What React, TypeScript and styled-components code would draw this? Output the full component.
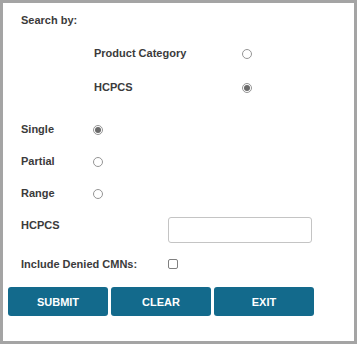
import styled, { createGlobalStyle } from 'styled-components'

const Global = createGlobalStyle`
  html, body { margin: 0; padding: 0; background: #ffffff; }
  body { font-family: "Liberation Sans", Arial, sans-serif; }
`

const Frame = styled.div`
  width: 357px;
  height: 344px;
  box-sizing: border-box;
  border: 3px solid #a4a4a4;
  background: #fff;
  padding: 7px 0 0 5px;
  display: flex;
  flex-direction: column;
`

const Heading = styled.div`
  height: 20px;
  display: flex;
  align-items: center;
  padding-left: 13px;
  font-size: 11px;
  font-weight: bold;
  color: #3b3b3b;
`

const SearchGroup = styled.div`
  margin-top: 6px;
  padding-left: 86px;
  display: flex;
  flex-direction: column;
`

const Row = styled.div<{ $h: number; $top?: number }>`
  height: ${(p) => p.$h}px;
  margin-top: ${(p) => p.$top ?? 0}px;
  display: flex;
  align-items: center;
`

const Section = styled.div`
  margin-top: 9px;
  padding-left: 13px;
  display: flex;
  flex-direction: column;
`

const Label = styled.span<{ $w: number }>`
  width: ${(p) => p.$w}px;
  flex: none;
  font-size: 11px;
  font-weight: bold;
  color: #3b3b3b;
`

const Radio = styled.span<{ $on?: boolean }>`
  width: 10px;
  height: 10px;
  box-sizing: border-box;
  border-radius: 50%;
  border: 1px solid #959595;
  background: #fff;
  display: flex;
  align-items: center;
  justify-content: center;
  margin-top: 2px;
  &::after {
    content: '';
    display: ${(p) => (p.$on ? 'block' : 'none')};
    width: 6px;
    height: 6px;
    border-radius: 50%;
    background: #6a6a6a;
  }
`

const TextBox = styled.input`
  width: 144px;
  height: 26px;
  box-sizing: border-box;
  border: 1px solid #c4c4c4;
  border-radius: 3px;
  background: #fff;
  outline: none;
  padding: 0 4px;
  margin-top: 10px;
`

const Check = styled.span`
  width: 10px;
  height: 10px;
  box-sizing: border-box;
  border: 1px solid #808080;
  border-radius: 2px;
  background: #fff;
`

const Buttons = styled.div`
  margin-top: 7px;
  display: flex;
  gap: 3px;
`

const Button = styled.button`
  width: 100px;
  height: 29px;
  border: none;
  border-radius: 3px;
  background: #136a8c;
  color: #fff;
  font-family: "Liberation Sans", Arial, sans-serif;
  font-size: 11px;
  font-weight: bold;
  cursor: pointer;
  padding: 0;
`

export default function App() {
  return (
    <>
      <Global />
      <Frame>
        <Heading>Search by:</Heading>
        <SearchGroup>
          <Row $h={34}>
            <Label $w={148}>Product Category</Label>
            <Radio />
          </Row>
          <Row $h={34}>
            <Label $w={148}>HCPCS</Label>
            <Radio $on />
          </Row>
        </SearchGroup>
        <Section>
          <Row $h={32}>
            <Label $w={72}>Single</Label>
            <Radio $on />
          </Row>
          <Row $h={32}>
            <Label $w={72}>Partial</Label>
            <Radio />
          </Row>
          <Row $h={32}>
            <Label $w={72}>Range</Label>
            <Radio />
          </Row>
          <Row $h={32}>
            <Label $w={147}>HCPCS</Label>
            <TextBox />
          </Row>
          <Row $h={32} $top={7}>
            <Label $w={147}>Include Denied CMNs:</Label>
            <Check />
          </Row>
        </Section>
        <Buttons>
          <Button>SUBMIT</Button>
          <Button>CLEAR</Button>
          <Button>EXIT</Button>
        </Buttons>
      </Frame>
    </>
  )
}
